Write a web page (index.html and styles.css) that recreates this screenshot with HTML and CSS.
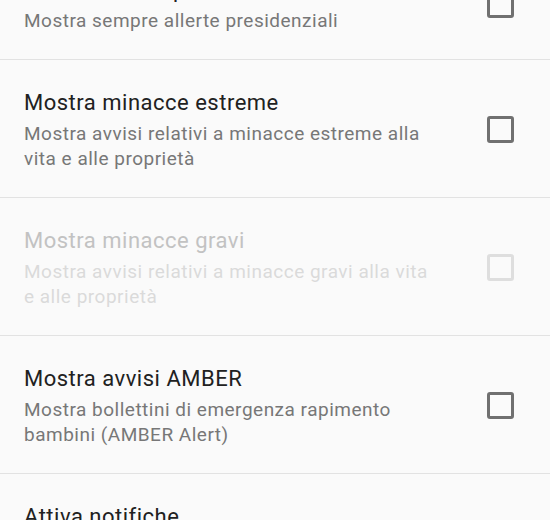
FILE: index.html
```html
<!DOCTYPE html>
<html>
<head>
    <title>Allerte di emergenza</title>
    <link rel="stylesheet" href="styles.css">
</head>
<body>
    <!-- The list is shown scrolled, so the first row is partly above the window -->
    <div class="pref-list">
        <div class="pref-row">
            <div class="pref-text">
                <div class="pref-title">Mostra allerte presidenziali</div>
                <div class="pref-summary">Mostra sempre allerte presidenziali</div>
            </div>
            <span class="checkbox"></span>
        </div>
        <div class="pref-row">
            <div class="pref-text">
                <div class="pref-title">Mostra minacce estreme</div>
                <div class="pref-summary">Mostra avvisi relativi a minacce estreme alla vita e alle proprietà</div>
            </div>
            <span class="checkbox"></span>
        </div>
        <div class="pref-row disabled">
            <div class="pref-text">
                <div class="pref-title">Mostra minacce gravi</div>
                <div class="pref-summary">Mostra avvisi relativi a minacce gravi alla vita e alle proprietà</div>
            </div>
            <span class="checkbox"></span>
        </div>
        <div class="pref-row">
            <div class="pref-text">
                <div class="pref-title">Mostra avvisi AMBER</div>
                <div class="pref-summary">Mostra bollettini di emergenza rapimento bambini (AMBER Alert)</div>
            </div>
            <span class="checkbox"></span>
        </div>
        <div class="pref-row">
            <div class="pref-text">
                <div class="pref-title">Attiva notifiche</div>
                <div class="pref-summary">Mostra le trasmissioni di avvisi di emergenza</div>
            </div>
        </div>
    </div>
</body>
</html>
```
FILE: styles.css
```css
html, body {
    height: 100%;
    margin: 0;
    background: #fafafa;
    overflow: hidden;
}

.pref-list {
    margin-top: -53px;
    font-family: Roboto, "Noto Sans", sans-serif;
    letter-spacing: 0.5px;
}

.pref-row {
    display: flex;
    align-items: center;
    padding: 28px 36px 26px 24px;
    border-bottom: 1px solid #e2e2e2;
}

.pref-text {
    flex: 1;
    margin-right: 50px;
}

.pref-title {
    font-size: 22px;
    line-height: 29px;
    color: #212121;
}

.pref-summary {
    margin-top: 4px;
    font-size: 19px;
    line-height: 25px;
    color: #777777;
}

.checkbox {
    box-sizing: border-box;
    width: 27px;
    height: 27px;
    border: 3px solid #707070;
    border-radius: 3px;
}

.disabled .pref-title {
    color: #c2c2c2;
}

.disabled .pref-summary {
    color: #dadada;
}

.disabled .checkbox {
    border-color: #dedede;
}
```
